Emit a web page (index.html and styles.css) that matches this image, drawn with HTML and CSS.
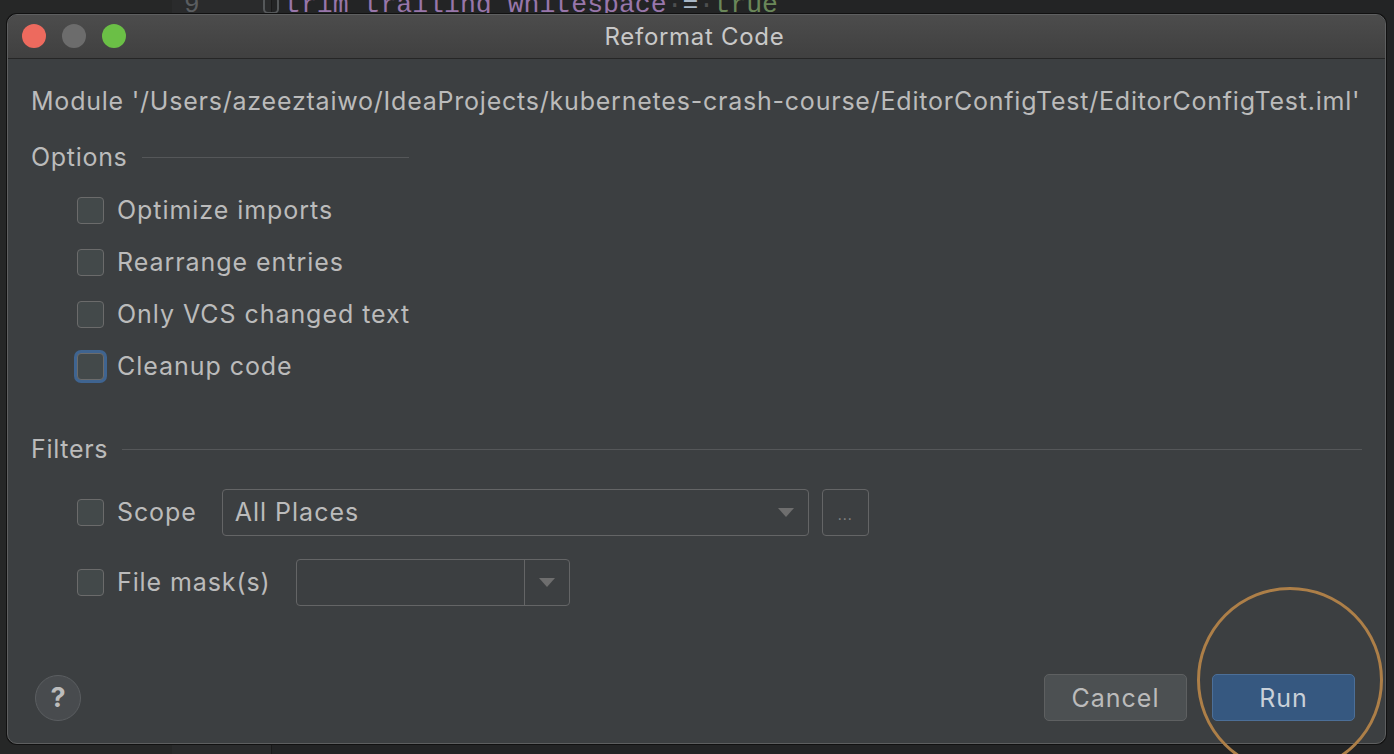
FILE: index.html
```html
<!DOCTYPE html>
<html lang="en">
<head>
<meta charset="utf-8">
<title>Reformat Code</title>
<link rel="stylesheet" href="styles.css">
</head>
<body>
<div class="ide">
  <div class="side"></div>
  <div class="gutter"><span class="lineno">9</span><span class="fold"></span></div>
  <div class="editor"><span class="k">trim_trailing_whitespace</span><span class="ws">·</span><span class="eq">=</span><span class="ws">·</span><span class="v">true</span></div>
</div>

<div class="dialog">
  <div class="titlebar">
    <div class="lights">
      <span class="light red"></span>
      <span class="light gray"></span>
      <span class="light green"></span>
    </div>
    <div class="title">Reformat Code</div>
  </div>
  <div class="content">
    <div class="module">Module '/Users/azeeztaiwo/IdeaProjects/kubernetes-crash-course/EditorConfigTest/EditorConfigTest.iml'</div>

    <div class="section options-head"><span class="section-label">Options</span><span class="rule short"></span></div>
    <div class="checks">
      <label class="row"><span class="box"></span><span>Optimize imports</span></label>
      <label class="row"><span class="box"></span><span>Rearrange entries</span></label>
      <label class="row"><span class="box"></span><span>Only VCS changed text</span></label>
      <label class="row"><span class="box focus"></span><span>Cleanup code</span></label>
    </div>

    <div class="section filters-head"><span class="section-label">Filters</span><span class="rule"></span></div>
    <div class="filter scope">
      <span class="box"></span><span class="flabel">Scope</span>
      <div class="combo wide"><span class="ctext">All Places</span><span class="arrow"></span></div>
      <div class="dots">...</div>
    </div>
    <div class="filter mask">
      <span class="box"></span><span class="flabel">File mask(s)</span>
      <div class="combo small"><span class="cfield"></span><span class="cbtn"><span class="arrow"></span></span></div>
    </div>

    <div class="footer">
      <div class="help">?</div>
      <div class="buttons">
        <div class="btn cancel">Cancel</div>
        <div class="btn run">Run</div>
      </div>
    </div>
  </div>
</div>
<div class="highlight"></div>
</body>
</html>
```

FILE: styles.css
```css
* { box-sizing: border-box; }
html, body { margin: 0; padding: 0; }
body {
  width: 1394px;
  height: 754px;
  overflow: hidden;
  background: #222;
  font-family: Inter, "Noto Sans", sans-serif;
  position: relative;
}
.ide {
  display: flex;
  height: 754px;
}
.side { width: 172px; background: #262727; }
.gutter {
  width: 100px;
  background: #2a2b2c;
  border-right: 1px solid #1a1a1a;
  position: relative;
  font-family: "Liberation Mono", "DejaVu Sans Mono", monospace;
  font-size: 26px;
  color: #5a5d60;
}
.lineno { position: absolute; left: 12px; top: -10px; }
.fold {
  position: absolute; left: 91px; top: -4px;
  width: 16px; height: 18px;
  border: 2px solid #55585a; border-radius: 5px;
}
.editor {
  flex: 1;
  background: #232425;
  padding-left: 13px;
  font-family: "Liberation Mono", "DejaVu Sans Mono", monospace;
  font-size: 26.5px;
  line-height: 30px;
  margin-top: -10px;
  height: 770px;
}
.k { color: #9876aa; }
.ws { color: #4d4f50; }
.eq { color: #a9b7c6; }
.v { color: #6a8759; }

.dialog {
  position: absolute;
  left: 7px; top: 14px;
  width: 1379px; height: 730px;
  border-radius: 10px;
  border: 1px solid #5e5f60;
  box-shadow: 0 0 0 1px #111;
  overflow: hidden;
  display: flex;
  flex-direction: column;
  background: #3c3f41;
}
.titlebar {
  height: 44px;
  flex: none;
  background: linear-gradient(#4c4c4c, #404040);
  border-bottom: 1px solid #262626;
  position: relative;
  display: flex;
  align-items: center;
  justify-content: center;
}
.lights {
  position: absolute; left: 14px; top: 9px;
  display: flex; gap: 16px;
}
.light { width: 24px; height: 24px; border-radius: 50%; }
.red { background: #ed6a5e; }
.gray { background: #6c6c6c; }
.green { background: #6bbf46; }
.title {
  color: #c8c8c8;
  font-size: 24px;
  letter-spacing: 0.7px;
  margin-left: -4px;
}
.content {
  flex: 1;
  display: flex;
  flex-direction: column;
  padding: 0 23px 22px 23px;
  color: #bbbbbb;
  font-size: 25px;
}
.module {
  margin-top: 22px;
  height: 40px;
  line-height: 40px;
  white-space: nowrap;
  letter-spacing: 0.78px;
}
.section {
  display: flex;
  align-items: center;
  height: 40px;
}
.options-head { margin-top: 16px; }
.filters-head { margin-top: 37px; }
.section-label { letter-spacing: 0.7px; }
.rule {
  flex: 1;
  height: 1px;
  background: #555759;
  margin-left: 14px;
}
.rule.short { flex: none; width: 267px; }
.checks { margin-top: 7px; padding-left: 46px; }
.row {
  display: flex;
  align-items: center;
  height: 52px;
  letter-spacing: 0.95px;
}
.box {
  width: 27px; height: 27px;
  flex: none;
  border: 1px solid #6b6b6b;
  border-radius: 4px;
  background: #43494a;
  margin-right: 13px;
}
.box.focus {
  border: 1px solid #6b6b6b;
  box-shadow: 0 0 0 3px #3f6490;
}
.filter {
  display: flex;
  align-items: center;
  height: 48px;
  padding-left: 46px;
  letter-spacing: 0.9px;
}
.scope { margin-top: 19px; }
.mask { margin-top: 22px; }
.flabel { margin-right: 25px; }
.combo {
  height: 47px;
  border: 1px solid #646566;
  border-radius: 4px;
  display: flex;
  align-items: center;
  position: relative;
}
.combo.wide { width: 587px; padding-left: 12px; }
.ctext { flex: 1; letter-spacing: 1px; }
.arrow {
  width: 0; height: 0;
  border-left: 8px solid transparent;
  border-right: 8px solid transparent;
  border-top: 9px solid #6e6e6e;
  margin-right: 14px;
}
.dots {
  width: 47px; height: 47px;
  margin-left: 13px;
  border: 1px solid #646566;
  border-radius: 4px;
  color: #8a8a8a;
  font-size: 14px;
  display: flex;
  align-items: flex-end;
  justify-content: center;
  padding-bottom: 12px;
  letter-spacing: 1px;
}
.combo.small { width: 274px; }
.cfield { flex: 1; height: 100%; border-right: 1px solid #646566; }
.cbtn {
  width: 44px; height: 100%;
  display: flex; align-items: center; justify-content: center;
}
.cbtn .arrow { margin-right: 0; }
.footer {
  margin-top: auto;
  display: flex;
  align-items: center;
  justify-content: space-between;
  padding-left: 4px;
  padding-right: 7px;
}
.help {
  width: 46px; height: 46px;
  border-radius: 50%;
  background: #484b4e;
  border: 1px solid #5b5e61;
  color: #bcbcbc;
  font-weight: 700;
  font-size: 27px;
  display: flex; align-items: center; justify-content: center;
}
.buttons { display: flex; gap: 25px; }
.btn {
  width: 143px; height: 47px;
  border-radius: 5px;
  display: flex; align-items: center; justify-content: center;
  font-size: 25px;
  letter-spacing: 1px;
}
.cancel { background: #4c5052; border: 1px solid #5e6061; color: #bbbbbb; }
.run { background: #365880; border: 1px solid #4c6f98; color: #c9d0d8; }
.highlight {
  position: absolute;
  left: 1197px; top: 587px;
  width: 186px; height: 186px;
  border-radius: 50%;
  border: 3px solid #ad7f48;
  pointer-events: none;
}
```
